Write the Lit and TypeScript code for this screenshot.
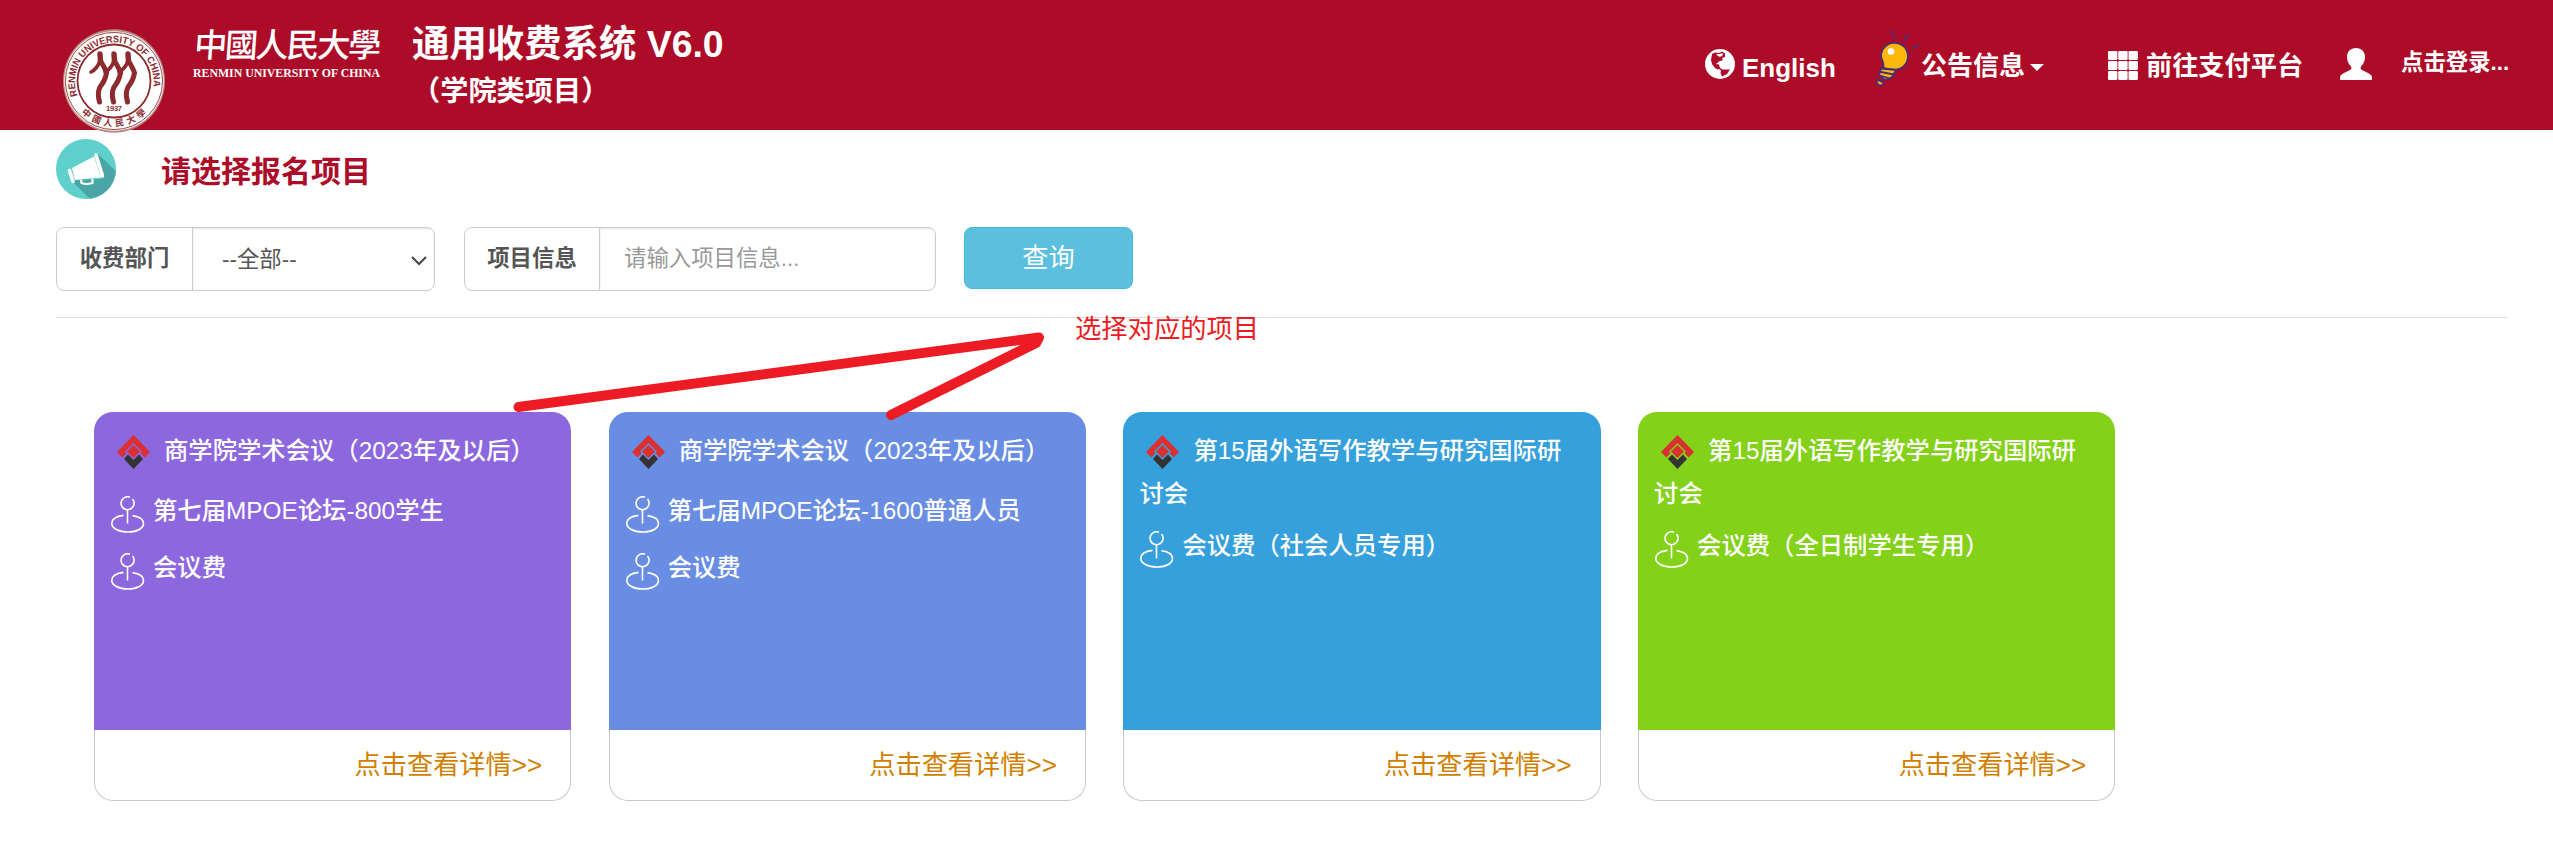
import { LitElement, html, css, svg } from 'lit';
import { customElement, property } from 'lit/decorators.js';

interface Project {
  color: string;
  title: string;
  items: string[];
}

const PROJECTS: Project[] = [
  { color: '#8d67de', title: '商学院学术会议（2023年及以后）', items: ['第七届MPOE论坛-800学生', '会议费'] },
  { color: '#688de2', title: '商学院学术会议（2023年及以后）', items: ['第七届MPOE论坛-1600普通人员', '会议费'] },
  { color: '#35a0dc', title: '第15届外语写作教学与研究国际研讨会', items: ['会议费（社会人员专用）'] },
  { color: '#83d118', title: '第15届外语写作教学与研究国际研讨会', items: ['会议费（全日制学生专用）'] },
];

// one figure of the seal, repeated three times
const figure = (x: number) => svg`
  <g transform="translate(${x} 0)">
    <path d="M37 25 L37.5 33" stroke-width="5.4"/>
    <path d="M37 32 Q34 40 28 43" stroke-width="3.6"/>
    <path d="M37.5 32 Q42 39 43.5 44 Q42 52 37 58 Q34 64 36.5 73" stroke-width="5"/>
  </g>`;

@customElement('project-card')
export class ProjectCard extends LitElement {
  static override styles = css`
    :host {
      display: flex;
      flex-direction: column;
      box-sizing: border-box;
      height: 389px;
      font-weight: 500;
      font-size: 24.35px;
      color: #fff;
    }

    .body {
      box-sizing: border-box;
      height: 318px;
      padding: 21px 16px 0;
      border-radius: 19px 19px 0 0;
    }

    .title {
      line-height: 35px;
      margin-bottom: 15px;
    }

    .title svg {
      width: 33px;
      height: 34px;
      margin: 0 14px 7px 7px;
      vertical-align: -16.5px;
    }

    .item {
      display: flex;
      height: 40px;
      line-height: 40px;
      margin-bottom: 17px;
    }

    .item svg {
      width: 34px;
      height: 38px;
      margin: 5px 8px 0 1px;
    }

    .more {
      box-sizing: border-box;
      flex: 1;
      padding-right: 28px;
      border: 1px solid #c8c8c8;
      border-top: 0;
      border-radius: 0 0 19px 19px;
      color: #d27f00;
      font-size: 26.2px;
      font-weight: 400;
      line-height: 70px;
      text-align: right;
    }
  `;

  @property({ attribute: false }) project!: Project;

  override render() {
    return html`
      <div class="body" style="background:${this.project.color}">
        <div class="title"><svg viewBox="0 0 33 34">
            <path d="M16.5 0 L33 17 L27.5 22.5 L23.5 18 L25 16.5 L16.5 8 L8 16.5 L9.5 18 L5.5 22.5 L0 17Z" fill="#dc2f2f"/>
            <path d="M16.5 10 L23 16.5 L16.5 23 L10 16.5Z" fill="#dc2f2f"/>
            <path d="M11 19.5 L16.5 25 L22 19.5 L26 24 L16.5 34 L7 24Z" fill="#333"/>
          </svg>${this.project.title}</div>
        ${this.project.items.map((item) => html`
          <div class="item">
            <svg viewBox="0 0 34 38" fill="none" stroke="#fff" stroke-width="1.6">
              <path d="M19 1.2 A6.5 6.5 0 1 0 21.5 3"/>
              <path d="M16.5 14 V27.5"/>
              <path d="M12.5 19.4 C5 20.2 .8 23.5 .8 27.5 C.8 32 7.5 36 17 36 C26.5 36 32.5 32 32.5 27.5 C32.5 23.5 28 20.5 21.5 19.6"/>
            </svg>
            <span>${item}</span>
          </div>`)}
      </div>
      <div class="more">点击查看详情&gt;&gt;</div>
    `;
  }
}

@customElement('app-root')
export class AppRoot extends LitElement {
  static override styles = css`
    :host {
      display: block;
      position: relative;
      height: 843px;
      overflow: hidden;
      background: #fff;
      color: #555;
      font-family: "Liberation Sans", "Noto Sans CJK SC", sans-serif;
    }

    header {
      display: flex;
      align-items: flex-start;
      box-sizing: border-box;
      height: 130px;
      padding-left: 63px;
      background: #ad0c28;
      color: #fff;
      font-weight: 700;
    }

    .seal {
      flex: none;
      width: 102px;
      height: 104px;
      margin-top: 29px;
      overflow: visible;
    }

    .logo {
      flex: none;
      width: 196px;
      height: 66px;
      margin: 20px 0 0 24px;
      overflow: visible;
    }

    .titles {
      flex: 1;
      padding: 22px 0 0 27px;
    }

    .name {
      font-size: 37.4px;
      line-height: 44px;
    }

    .sub {
      margin-top: 5px;
      font-size: 28.2px;
      line-height: 40px;
    }

    nav {
      display: flex;
      font-size: 26px;
      line-height: 40px;
      white-space: nowrap;
    }

    nav a {
      display: flex;
      align-items: flex-start;
    }

    nav svg {
      flex: none;
    }

    .english {
      width: 170px;
    }

    .english svg {
      width: 30px;
      height: 30px;
      margin: 49px 7px 0 0;
    }

    .english span {
      margin-top: 48px;
    }

    .notice {
      width: 233px;
    }

    .notice svg {
      width: 45px;
      height: 60px;
      margin: 28px 1px 0 0;
    }

    .notice span, .pay span {
      margin-top: 46px;
    }

    .notice i {
      margin: 64px 0 0 5px;
      border: 7px solid transparent;
      border-top-color: #fff;
      border-bottom: 0;
    }

    .pay {
      width: 232px;
      font-size: 26.2px;
    }

    .pay svg {
      width: 30px;
      height: 29px;
      margin: 51px 8px 0 0;
    }

    .login {
      width: 213px;
      font-size: 22.4px;
    }

    .login svg {
      width: 32px;
      height: 32px;
      margin: 48px 29px 0 0;
    }

    .login span {
      margin-top: 43px;
    }

    main {
      padding: 9px 46px 0 56px;
    }

    .heading {
      display: flex;
      gap: 45px;
      height: 60px;
      color: #ad0c28;
      font-size: 30px;
      font-weight: 700;
      line-height: 65px;
    }

    .heading svg {
      width: 60px;
      height: 60px;
    }

    .filters {
      display: flex;
      height: 64px;
      margin-top: 28px;
      font-size: 22.4px;
    }

    .group {
      display: flex;
      box-sizing: border-box;
      border: 1px solid #ccc;
      border-radius: 8px;
      overflow: hidden;
    }

    .dept {
      width: 379px;
      margin-right: 29px;
    }

    .info {
      width: 472px;
      margin-right: 28px;
    }

    .group label {
      box-sizing: border-box;
      flex: none;
      width: 136px;
      border-right: 1px solid #ccc;
      font-weight: 700;
      line-height: 61px;
      text-align: center;
    }

    .info label {
      width: 135px;
    }

    .field {
      display: flex;
      flex: 1;
      align-items: center;
      min-width: 0;
      padding: 0 8px 0 24px;
      box-shadow: inset 0 1px 2px rgba(0, 0, 0, 0.12);
    }

    .dept .field {
      padding: 0 7px 0 29px;
    }

    select, input {
      flex: 1;
      min-width: 0;
      padding: 0;
      border: 0;
      outline: 0;
      appearance: none;
      background: transparent;
      color: #555;
      font: inherit;
    }

    input::placeholder {
      color: #999;
    }

    .field svg {
      width: 16px;
      height: 10px;
      margin-top: 3px;
    }

    button {
      width: 169px;
      height: 62px;
      padding: 0 0 1px;
      border: 1px solid #46b8da;
      border-radius: 8px;
      background: #5bc0de;
      color: #fff;
      font: 26.2px/40px "Liberation Sans", "Noto Sans CJK SC", sans-serif;
    }

    hr {
      height: 1px;
      margin: 26px 0 94px;
      border: 0;
      background: #ddd;
    }

    .cards {
      display: grid;
      grid-template-columns: repeat(4, 477.3px);
      gap: 37.4px;
      padding-left: 38px;
    }

    .markup {
      position: absolute;
      left: 500px;
      top: 300px;
      width: 800px;
      height: 130px;
      font-size: 26.3px;
    }
  `;

  renderSeal() {
    return html`
      <svg class="seal" viewBox="0 0 102 104">
        <defs>
          <path id="top" d="M14.5 66.5 A39.3 39.3 0 1 1 88.5 65.5"/>
          <path id="bottom" d="M12.5 77 A46.5 46.5 0 0 0 89.5 77"/>
        </defs>
        <ellipse cx="51" cy="52" rx="51" ry="51.7" fill="#b98a86"/>
        <circle cx="51" cy="52" r="49.8" fill="#fff"/>
        <circle cx="51" cy="52" r="48.6" fill="none" stroke="#8c3434" stroke-width=".9"/>
        <circle cx="51" cy="52" r="36.5" fill="none" stroke="#8c2a2e" stroke-width="1.8"/>
        <g fill="none" stroke="#8c2a2e" stroke-linecap="round">
          ${figure(0)}${figure(14)}${figure(28)}
        </g>
        <g fill="#8c2a2e">
          <text font-size="9.8" font-weight="700"><textPath href="#top" textLength="142" lengthAdjust="spacingAndGlyphs">RENMIN UNIVERSITY OF CHINA</textPath></text>
          <text font-size="9" font-weight="700"><textPath href="#bottom" startOffset="9" textLength="72">中國人民大學</textPath></text>
          <text x="43" y="82" font-size="7.5" font-weight="700" textLength="16">1937</text>
        </g>
      </svg>`;
  }

  renderHeader() {
    return html`
      <header>
        ${this.renderSeal()}
        <svg class="logo" viewBox="0 0 196 66" fill="#fff">
          <text x="7" y="37" font-size="33" font-weight="500" textLength="187" transform="skewX(-4)">中國人民大學</text>
          <text x="4" y="57" font-family="Liberation Serif, serif" font-size="13.5" font-weight="700" textLength="187" lengthAdjust="spacingAndGlyphs">RENMIN UNIVERSITY OF CHINA</text>
        </svg>
        <div class="titles">
          <div class="name">通用收费系统 V6.0</div>
          <div class="sub">（学院类项目）</div>
        </div>
        <nav>
          <a class="english">
            <svg viewBox="0 0 30 30">
              <circle cx="15" cy="15" r="15" fill="#fff"/>
              <path d="M7 5 L10 3.5 L14 4 L17 2.5 L20 4.5 L20 8 L17 9 L18 11 L14 12.5 L11 15 L13 17 L14 20 L12.5 20.5 L10 19 L7 15 L6 11Z" fill="#ad0c28"/>
              <path d="M11 5 L15 5 L17 4 L18 6 L15 8 L13 7Z" fill="#fff"/>
              <path d="M11 15 L14 15.5 L15 19 L17.5 20.5 L25 20.5 L22 25 L17 27.5 L15.5 24 L16 21.5 L12.5 19Z" fill="#ad0c28"/>
            </svg>
            <span>English</span>
          </a>
          <a class="notice">
            <svg viewBox="0 0 45 60" fill="#fdb90b" stroke="#4a2b78" stroke-width="1.8" stroke-linecap="round" stroke-linejoin="round">
              <path d="M8 40 C10 36 6 31 6 28 A13.5 13.5 0 1 1 22 41.5 C18 42 13 41 8 40Z"/>
              <path d="M6 40.5 L21 42 L18.5 47 Q14 53 9 51 L4 47Z"/>
              <path d="M6 44 L19 46.5 M5 47.5 L15 50.5" fill="none"/>
              <path d="M2 51.5 L9 55 Q7 58.5 4 57 Q1 55.5 2 51.5Z"/>
              <path d="M16.5 3 L19 10 M32.5 6.5 L29 12.5 M36.5 20 L43.5 18" fill="none"/>
              <circle cx="16" cy="23.5" r="3.3" fill="#fff" stroke="none"/>
            </svg>
            <span>公告信息</span><i></i>
          </a>
          <a class="pay">
            <svg viewBox="0 0 30 29" fill="#fff">
              ${[0, 10.25, 20.5].map((x) => [0, 10, 20].map((y) => svg`<rect x=${x} y=${y} width="9.4" height="9" rx="1.2"/>`))}
            </svg>
            <span>前往支付平台</span>
          </a>
          <a class="login">
            <svg viewBox="0 0 32 32" fill="#fff">
              <path d="M16 0 C21.5 0 25 3.5 25 9 C25 13 23.5 16 21 18.5 C20 20.5 21 21.5 23 22.5 L29 25.5 Q32 27 32 29.5 V31 Q32 32 31 32 H1 Q0 32 0 31 V29.5 Q0 27 3 25.5 L9 22.5 C11 21.5 12 20.5 11 18.5 C8.5 16 7 13 7 9 C7 3.5 10.5 0 16 0Z"/>
            </svg>
            <span>点击登录...</span>
          </a>
        </nav>
      </header>`;
  }

  override render() {
    return html`
      ${this.renderHeader()}
      <main>
        <div class="heading">
          <svg viewBox="0 0 60 60">
            <defs><clipPath id="disc"><circle cx="30" cy="30" r="30"/></clipPath></defs>
            <circle cx="30" cy="30" r="30" fill="#5fd0cb"/>
            <path d="M42 15 L66 38 L50 66 L36 62 L15 41 L46 40Z" fill="#4aa5a5" clip-path="url(#disc)"/>
            <path d="M16 29 L38 17.5 L45 38.5 L19 41Z" fill="#fff"/>
            <path d="M13.5 31.5 L17 42.5 M40 16 L46.5 37" stroke="#fff" stroke-width="3.6" stroke-linecap="round"/>
            <path d="M25 41 L25.5 44 Q30 46 36.5 44 V40" fill="none" stroke="#fff" stroke-width="2.2"/>
          </svg>
          <span>请选择报名项目</span>
        </div>
        <div class="filters">
          <div class="group dept">
            <label>收费部门</label>
            <div class="field">
              <select><option>--全部--</option></select>
              <svg viewBox="0 0 16 10" fill="none" stroke="#444" stroke-width="2"><path d="M1 1 L8 8 L15 1"/></svg>
            </div>
          </div>
          <div class="group info">
            <label>项目信息</label>
            <div class="field"><input placeholder="请输入项目信息..."></div>
          </div>
          <button>查询</button>
        </div>
        <hr>
        <div class="cards">
          ${PROJECTS.map((p) => html`<project-card .project=${p}></project-card>`)}
        </div>
      </main>
      <svg class="markup" viewBox="500 300 800 130">
        <path d="M518.5 407 L1039 337.5 L1036 343 L891 415" fill="none" stroke="#ed1c24" stroke-width="10" stroke-linecap="round" stroke-linejoin="round"/>
        <text x="1075" y="338" fill="#ed1c24">选择对应的项目</text>
      </svg>
    `;
  }
}
